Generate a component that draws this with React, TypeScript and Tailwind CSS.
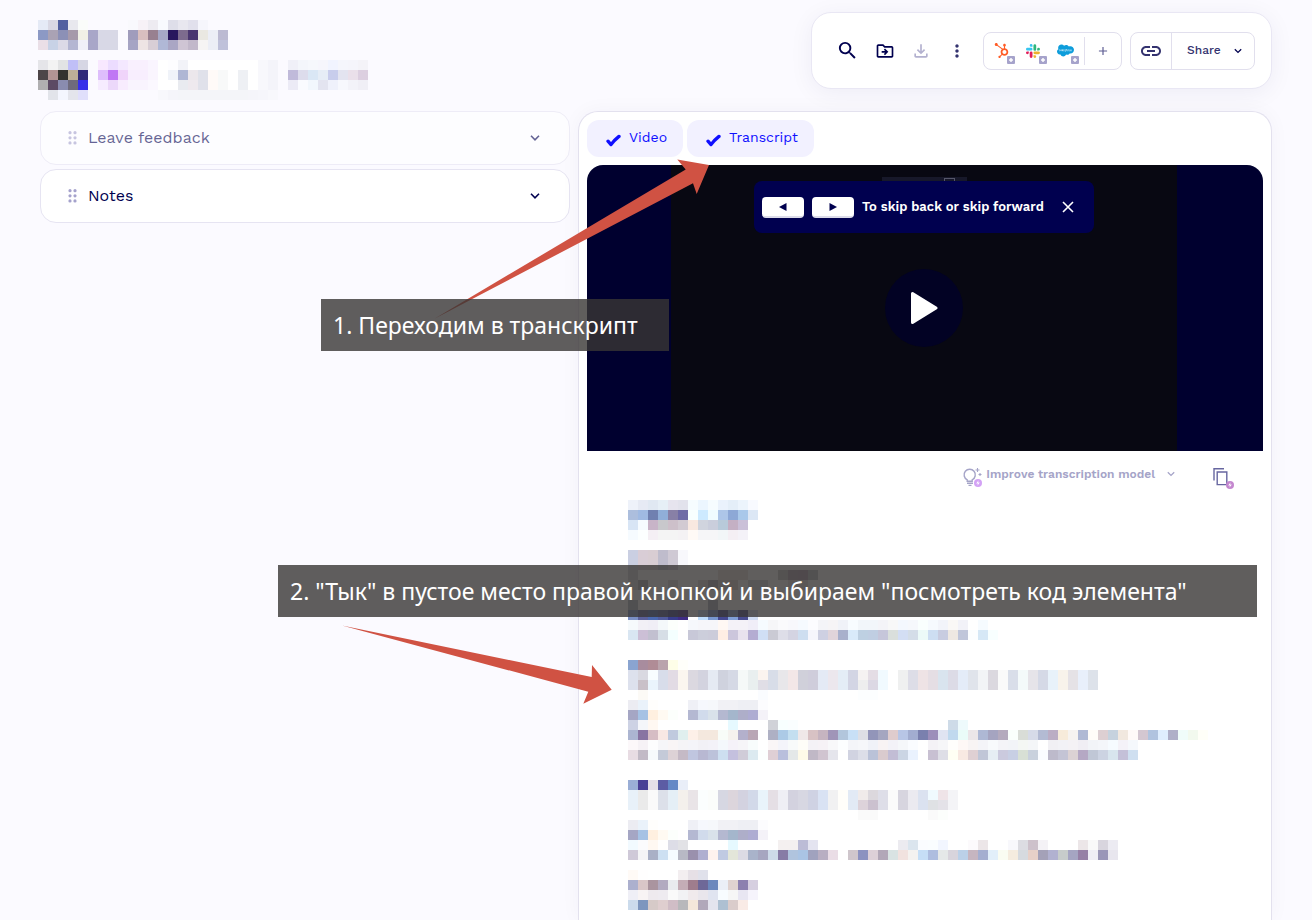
import React from "react";
import { FaHubspot, FaSalesforce } from "react-icons/fa";
import {
  MdAdd,
  MdLink,
  MdMoreVert,
  MdOutlineDriveFileMove,
  MdOutlineFileDownload,
  MdSearch,
} from "react-icons/md";

const CELL = 10;

const speakerLine = [
  "ececf2 eaf2fa fffefc . . . eff0f6 f6f8fd f6f8fb f1f1f5 f1f1f5 eeeff4 eeeff4 fcfcfe",
  "a5a6c4 a6c2e4 fff0e0 fffaf2 fcfffc . b4b8d2 d1dbec d9e2ea b4b8d0 a4b6cc aeaec9 aeacd2 f4f2f8",
];

const headerRows = [
  "e5eaf6 d9d8e4 5260a0 e8e8ee fafcfa . . . . f9f9fd f7f2f7 edebf1 f8fafe dedee9 e8e7ef e1e0ec f6f6fc",
  "8c99c5 aaa2b4 8c90b6 a699aa f1f0e6 a8a6c8 d8d8e6 d8d8e6 . a09cbc d9bfbf 988090 a6a8c6 28165e 7d6b8e 4a3670 eae8e2 eceef6 bcbad2",
  "eadfe7 c8d2e6 dcdae7 b4b6d2 f0f0f8 a8a6c8 d8d8e6 d8d8e6 . a6a4c4 eee4e4 d8ced6 b0b8d6 aaa6c4 cfc5d4 c2b8ca f6f4f4 eceef6 bfc1da",
  "",
  "e5e5e9 f3f3f3 e2e3e4 c0bff7 d6d6e4 . f8e8ff ecdcff f4e8ff f9f0fe f9f0fe faf5ff ffffff fdfdff f2f3f8 ffffff ffffff ffffff ffffff ffffff ffffff ffffff f8f8fc f4f4fa . f0f0f8 f4f6fb f6f8fc f6f6fc f1f4ff f5f6fc f5f5fb f4f3f8",
  "4d4548 b29494 33322f bcae98 302a7a . debefc c078f4 f0d4fa f8eefe f8eefe faf5fe ffffff f0f3f9 afb6d4 ece7ec e0e1ea fffaf8 f8f9f9 ffffff eef0f4 ffffff f8f8fc f4f4fa . c0bada dddcec dae7f5 e6edf6 c8cdec e3e4f0 eae0ea dccfe0",
  "b0afb1 5c4a64 8a8caf 6f6b7c 3730e9 . f6ecff ecd8fa f8ecfe f9f4fe f9f4fe fbf8ff ffffff ffffff e9ebf0 eee9ee e0e1ea fffaf8 f8f9f9 ffffff eef0f4 ffffff f8f8fc f4f4fa . ecebf6 fafbff f2f7fd e3e4f0 eff1fb f7f8fd f3f3f9 f0eff6",
  ". e2e4ea f4f6fe e4e5ec e0dffb . . . . . . . f8f8fc f5f5fa f4f5f9 f4f5f9 f4f5f9 f4f5f9 f4f5f9 f4f5f9 f4f5f9 f5f5fa f6f6fb f8f8fc",
];

const transcriptRows = [
  "eef2fa e6eaf4 e0e8f2 e6eff6 e6e4ee e2e2ec f6fcff ecf6ff f6fcff eaf2fc e4eef8 ecf4fc f8faff",
  "acbedd a0bae2 7080b0 90aed8 8880a6 6f6ca6 f8ffff cdeaff f0fcff adc6e8 8da8d6 a9c8ea dce7f5",
  "d8e5f5 f6fbff c8b4c8 c8c8cc cdc0ca d2cad2 f8e8e0 d0d4de cacedc b8cada c4b0c4 cac0d8",
  "f6fbff fcffff f4eff4 f4f4f4 f4f4f4 f4f2f4 fffaf6 f6f6f8 f6f6f8 f2f6f8 f4eff4 f4f2f8",
  "",
  "cacfe2 d9cdd6 d9cdd3 bfbccc cfc9d4 f8f8fc",
  "cacfe2 d9cdd6 d9cdd3 bfbccc cfc9d4 f8f8fc",
  "d0d0d8 . . . . . . . . ece0dc ece0dc ece0dc . . . c0c0c0 a89aa8 a898a8 b8bcc0",
  "d8d8dc a8a8b0 . . dcd4d4 . . dcd4d4 a8a4b0 dcd0cc dcd0cc . d0d4dc d0d4dc . . e4dcdc e4dcdc",
  "",
  "b0b8c4 . . . . . . . a8b0bc",
  "7a8fc4 5a5f9a 4a68b0 505a9c 383c8c 402c84 . c0e0ff 7898d0 444890 80a0d8 484c90 d0dcf4",
  "f6fafc f2f0f6 f0eef6 f4f8fa fcfffc . f6f8fc f6f6fa f6f6fa fff8f4 f4f2f8 f4f2f8 f0eef8 f6fbff f6f6f8 fafafc f8f8fc f6faff fcfcff f4f4f8 f6f4f6 f0f2f8 f8fcff f2f6fa f2f6fa f4f4f8 f8f8f8 f4f8fe f6f8fc fafffe f6fafe f2f4fa faf8f6 f2f2f8 . f6fbff",
  "d9e6f2 ccbfd6 c2c0d0 d6dee6 f4ffff . c8c8d8 cccedb ccccda ffeee4 ccc6dc e8e2ee b4acd2 d0dff5 cacad4 dedee8 d4d4e2 cedef0 f6f6fc ced0e2 e0d4da a8b0cc d9eafa bed0e2 c0cee2 c6c6da dadfdc d3def4 d4dde8 ecfaf8 cddef2 c8cce0 eee8e2 c0c6da fcfeff d6e8f6 f8ffff",
  "",
  "",
  "8aa4d0 a88c9e b08c96 baa4ac fefee8 fffffa",
  "dde1ed d9d9e1 f8fdff d8ddea e2dbe4 fbf6ef dbd8e0 d3d3df e5eaf3 cfd2de d5d9e5 f5f9f8 e9efef fbf4ef d8dde8 e8e7ea f3e7e7 d0d0da cfcddb e4eaf5 ece7ed e4edf6 d3d5e4 f5f2f2 e4dde5 f1faff . eff0f0 dddde7 eee3e5 e5dee4 d9e4ee dcdbe6 e4ecf8 e0e4eb f2f4f6 dbd8df fafafa d9dee9 f4fafa e6e4e9 d5d9e6 e8f2fa f8f3eb e5e2e6 e8effb dde2ea",
  "dde1ed c9c0c8 eaf4fc d8ddea e2dbe4 fbf6ef dbd8e0 d3d3df e5eaf3 cfd2de d5d9e5 f5f9f8 e9efef e0dee6 d8dde8 e8e7ea f3e7e7 d0d0da cfcddb e4eaf5 ece7ed e4edf6 d3d5e4 eeeeee dcd8e4 f1faff . eff0f0 dddde7 eee3e5 e5dee4 d9e4ee dcdbe6 e4ecf8 e0e4eb f2f4f6 dbd8df fafafa d9dee9 f4fafa e6e4e9 d5d9e6 e8f2fa f8f3eb e5e2e6 e8effb dde2ea",
  ". fcfaf6 . . . . . . . . . . . fafcff . . . . . . . . . fcfeff fcfeff",
  speakerLine[0],
  speakerLine[1],
  "cdd2e4 f4f6fa fff8f2 . . . . . . . e6f9ff . . . d0d2d8 f8ffff fafeff . . . . . . . . . . . . . . . cedbe8 eefafc",
  "acb5d1 8874a2 d6bdc4 f8e8e4 c0cade e0efee fdf0e8 f4e8de f4e8de f8fcf8 f5f2ee b3b0cc b9a6b5 fefeff aeb0c4 accae6 c4dff0 efe8e8 d8c2c4 c6b4c0 a095b8 b2c6dc c8e0f6 dddfe5 9295b9 a5a6c0 dfcccd b8c6e6 a2add0 7a80ae 9c8eba e0e4f2 c0d9ee eafcf8 ebe6e8 aeb8d4 a5a4c0 b4aabd fafffc d9ddd7 d6dbe8 b3bbd3 bbadc4 f7ebda f6f3f0 b0b9d4 fffcf8 ddcfd2 c6d2de f1e8df fffaf8 d4c7d1 b0c3df dfeefe afafc8 f0fcfa f2f9ee fffff8",
  "fcf8fa f6f2f6 fdfdfe f6f6f9 f9f5f6 f5f4f7 f4f4f9 f2f1f6 f3f2f8 f4f8fc f5f2f9 f6f5f8 f8fcfc . faf6f7 f4f4fa f8fafa fefdf8 f4f2f6 f6f2f6 f8f8fa fcfeff f4f5f9 f6f7fa f0f2f8 f8f3f4 f3f2f8 f5f7fa fafcff . f4f2f6 f6f6f8 fffefc fef8f6 f8f4f4 f4f4f8 f8fafc f4f4f8 f2f4f8 f4f7f4 f4f6f8 . f1f0f4 f2f2f6 f4f2f5 f0eef4 f2f4f8 f4f6fa f6fbff f4f2f8 f5f8fc",
  "e8dce3 c2bac6 f6fafc c4cad8 ddd2d6 c5bac6 c0c6e0 b8b8d2 bcc2da cddff0 c4c0de d0ccd8 dceaf0 fcfffe dfcfd5 b9bfdc e4e8e8 fefae8 c0b8c6 d0c4d0 e5e5ec . d1d3e1 dcdee8 bac2d8 dacbce c2bdd5 cbd5e4 eaf2fe . c8c0d2 dedee6 fffff4 f8e9e2 dfd0d3 c0c6d7 e6eef4 cbcade c8cfe4 d8e0d5 c9d1dd fafcff bdbacb c4c4d5 dcd2d4 b5a8c4 c0c7d6 ccd3e2 d8e5ee c4c0d8 cfdff0",
  "",
  "",
  "9aaed6 4a4096 e6dfe8 5c5ca4 6488c6 e9eef8",
  "e8f1f9 eaeaea fafafa dce0e9 e5eff6 f4f0ec e9e4e7 fbfefe fbfdfb d6d7e2 dcd5dc d3d2e0 d2d9e9 e9f4fb e5dfe5 efeff5 d3d2df d7d7e2 cfd2e3 d9e2f3 f1f1f2 fffefa e2eaf5 f0ebea dcd8dd dedee8 fbfbfb d7d5df ebeaf0 dbe2f0 f0fafe efe4e8 f4f4f7",
  "e8f1f9 eaeaea fafafa dce0e9 e5eff6 f4f0ec e9e4e7 fbfefe fbfdfb d6d7e2 dcd5dc d3d2e0 d2d9e9 e9f4fb e5dfe5 efeff5 d3d2df d7d7e2 cfd2e3 d9e2f3 f1f1f2 fffefa e2eaf5 ddd3da cbc1cf dedee8 fbfbfb d7d5df ebeaf0 dbe2f0 dfe1e4 e4e2e8 f4f4f7",
  ". . . . . . . . . . . . . . . . . . . . . . . fafafa fafafa . . . . . fafafa fcfefc",
  speakerLine[0],
  speakerLine[1],
  "f2faff fbfbfd fff8f2 fffefe dddde7 e2e2e6 . . . . e6f9ff . . . . f4f0f0 f4f0f0 bcbcd6 e4e4f0 . . . . . . . . ecebf0 dbe5ee fafcff fafdff f2f6ff . . fcfafc ece6e8 . . f8f8fc dcdce2 cdc1cb f4f2f6 . . . ece6e8 f9f9f9 d8d5de ecebf2",
  "cfc9d8 f4f4f6 a9b0c6 cde0f2 f6fcff b8b9c5 9a90ad b0aed0 fef2ee c0cae2 e3e6d9 dcdbe4 a9b3ca a6a6c0 cddbe9 877ca6 b0c4de aac4e4 a0a2be b8aec2 eadde6 . cfc6cc 8c92c0 ddd0d8 b2a7b8 d9e3e3 f1e2df f4f2f0 c6def6 aebddf e5e8e8 d8d4dc bbd0e8 c6b5c0 a4aed0 e2effa fafcf2 f5ecdf d6dadf e7d0c8 a4a1b8 b1b1d0 c7cccb a5a5c2 9680a6 efeef6 9a96b8 e8e6ee",
  "",
  "fffaf6 fffefe . . . f3eef0 e6e0e6 e0e1eb",
  "acb0ce d9c6c8 aa949f b2aac0 e9ebee c4adb6 9f7d8d 6e6898 6c88bd ebeff7 dfd2d0 8c80af d6cfe0",
  "efeff6 f8f4f4 eeeaee eeebf0 fafafa f2f2f4 f0eaec e9e6ec e0e4f0 f8fcff f6f6f6 e8e6f2 f6f4fc",
  "cbdbec 7d96be d6cac8 dfcecf d0bdc6 b8b8bb f4e7da b1a8ba e4e4ee aec0d2 dacccb f9ebe6",
];

function Mosaic({ rows, columns }: { rows: string[]; columns: number }) {
  return (
    <svg
      aria-hidden="true"
      className="block shrink-0"
      width={columns * CELL}
      height={rows.length * CELL}
      shapeRendering="crispEdges"
    >
      {rows.map((row, y) =>
        row.split(" ").map((color, x) =>
          color && color !== "." ? (
            <rect key={`${x}-${y}`} x={x * CELL} y={y * CELL} width={CELL} height={CELL} fill={`#${color}`} />
          ) : null,
        ),
      )}
    </svg>
  );
}

function Chevron({ width = 10 }: { width?: number }) {
  return (
    <svg width={width} height="6" viewBox="0 0 10 6" fill="none" stroke="currentColor" strokeWidth="1.6" aria-hidden="true">
      <path d="M1 .8 5 4.8 9 .8" />
    </svg>
  );
}

function Grip() {
  return (
    <svg width="9" height="14" viewBox="0 0 9 14" fill="#a5a2cc" aria-hidden="true">
      {[1.7, 6.8, 11.9].map((y) => (
        <React.Fragment key={y}>
          <circle cx="2" cy={y} r="1.6" />
          <circle cx="7" cy={y} r="1.6" />
        </React.Fragment>
      ))}
    </svg>
  );
}

function Check() {
  return (
    <svg className="mt-1" width="15" height="13" viewBox="0 0 15 13" fill="none" stroke="#0f0fff" strokeWidth="3.3" strokeLinecap="round" strokeLinejoin="round" aria-hidden="true">
      <path d="M2 7.2 5 10.6Q8 6.4 13 2.4" />
    </svg>
  );
}

function SlackMark() {
  return (
    <svg width="14" height="14" viewBox="0 0 54 54" aria-hidden="true">
      <path fill="#36C5F0" d="M19.7.1a5.4 5.4 0 1 0 0 10.8h5.4V5.5A5.4 5.4 0 0 0 19.7.1m0 14.4H5.4a5.4 5.4 0 0 0 0 10.8h14.3a5.4 5.4 0 0 0 0-10.8" />
      <path fill="#2EB67D" d="M53.8 19.9a5.4 5.4 0 0 0-10.8 0v5.4h5.4a5.4 5.4 0 0 0 5.4-5.4m-14.4 0V5.5a5.4 5.4 0 0 0-10.7 0v14.4a5.4 5.4 0 1 0 10.7 0" />
      <path fill="#ECB22E" d="M34.1 54a5.4 5.4 0 1 0 0-10.8h-5.4v5.4a5.4 5.4 0 0 0 5.4 5.4m0-14.4h14.3a5.4 5.4 0 0 0 0-10.8H34.1a5.4 5.4 0 0 0 0 10.8" />
      <path fill="#E01E5A" d="M0 34.2a5.4 5.4 0 0 0 10.8 0v-5.4H5.4A5.4 5.4 0 0 0 0 34.2m14.3 0v14.4a5.4 5.4 0 0 0 10.8 0V34.2a5.4 5.4 0 1 0-10.8 0" />
    </svg>
  );
}

function Integration({ label, children }: { label: string; children: React.ReactNode }) {
  return (
    <button aria-label={label} className="relative flex h-9 w-8 items-center justify-center">
      {children}
      <svg className="absolute right-0.5 bottom-[5px]" width="8" height="8" viewBox="0 0 8 8" aria-hidden="true">
        <rect width="8" height="8" rx="1" fill="#a6a3cb" />
        <path d="M4 2 4.8 3.2 6 4 4.8 4.8 4 6 3.2 4.8 2 4 3.2 3.2Z" fill="#fff" stroke="#fff" strokeWidth=".6" />
      </svg>
    </button>
  );
}

function Toolbar() {
  return (
    <div className="flex h-[77px] items-center rounded-[20px] border border-[#e9e7f4] bg-white pr-4 pl-[17px] text-[#00004f] shadow-[0_4px_24px_rgba(0,0,80,0.06)]">
      <button aria-label="Search" className="flex w-9 justify-center">
        <MdSearch size={23} />
      </button>
      <button aria-label="Move to folder" className="mr-0.5 flex w-9 justify-center pl-1">
        <MdOutlineDriveFileMove size={20} />
      </button>
      <button aria-label="Download" className="flex w-9 justify-center text-[#b3b1cf]">
        <MdOutlineFileDownload size={20} />
      </button>
      <button aria-label="More" className="flex w-9 justify-center text-[#34336f]">
        <MdMoreVert size={20} />
      </button>
      <div className="ml-2 flex h-[38px] items-center rounded-lg border border-[#e1dfed] pl-px">
        <Integration label="HubSpot">
          <FaHubspot size={15} color="#ff5c26" />
        </Integration>
        <Integration label="Slack">
          <SlackMark />
        </Integration>
        <Integration label="Salesforce">
          <FaSalesforce size={17} color="#0d9ddb" />
        </Integration>
        <span className="ml-[3px] h-7 w-px bg-[#e1dfed]" />
        <button aria-label="Add integration" className="flex h-9 w-9 items-center justify-center text-[#5d5c92]">
          <MdAdd size={14} />
        </button>
      </div>
      <div className="ml-2 flex h-[38px] items-stretch rounded-lg border border-[#e1dfed]">
        <button aria-label="Copy link" className="flex w-[41px] items-center justify-center border-r border-[#e1dfed] text-[#34336f]">
          <MdLink size={24} />
        </button>
        <button className="flex w-[82px] items-center justify-between pr-3 pl-[15px] text-xs font-medium text-[#34336f]">
          <span className="pb-0.5">Share</span>
          <span className="text-[#00004f]">
            <Chevron width={8} />
          </span>
        </button>
      </div>
    </div>
  );
}

function Section({ title, faded }: { title: string; faded?: boolean }) {
  return (
    <button
      className={
        faded
          ? "flex h-[54px] w-full items-center rounded-2xl border border-[#e6e4f2] bg-white pr-[29px] pl-[27px] text-base text-[#00004f] opacity-60"
          : "flex h-[54px] w-full items-center rounded-2xl border border-[#e6e4f2] bg-white pr-[29px] pl-[27px] text-base text-[#00004f]"
      }
    >
      <Grip />
      <span className="ml-[11px] flex-1 text-left">{title}</span>
      <Chevron />
    </button>
  );
}

function Toggle({ label }: { label: string }) {
  return (
    <button aria-pressed="true" className="flex h-[37px] items-center gap-2 rounded-xl bg-[#f2f1ff] pr-4 pl-[19px] text-sm text-[#0f0fff]">
      <Check />
      <span className="pb-1">{label}</span>
    </button>
  );
}

function KeyCap({ direction }: { direction: "back" | "forward" }) {
  return (
    <kbd className="flex h-[21px] w-[42px] items-center justify-center rounded border-b-2 border-[#dcdcea] bg-white pt-0.5">
      <svg width="8" height="8" viewBox="0 0 8 8" fill="#00004f" aria-hidden="true">
        <path d={direction === "back" ? "M7.5 0v8L0 4Z" : "M.5 0v8L8 4Z"} />
      </svg>
    </kbd>
  );
}

function VideoPlayer() {
  return (
    <div className="relative mt-2 flex aspect-[676/286] justify-center overflow-hidden rounded-t-2xl bg-[#00002f] pr-0.5">
      <div className="h-full w-3/4 bg-[#080812]" />
      <div className="absolute top-3 left-[295px] flex h-3 w-[85px] justify-end bg-[#17182a] pt-px pr-3">
        <span className="h-3 w-[11px] border border-[#55566a]" />
      </div>
      <div className="absolute top-4 flex h-[52px] w-[340px] items-center gap-2 rounded-lg bg-[#00004f] px-2 text-[13px] font-semibold text-white">
        <KeyCap direction="back" />
        <KeyCap direction="forward" />
        <span className="flex-1 whitespace-nowrap">To skip back or skip forward</span>
        <button aria-label="Close hint" className="mr-3">
          <svg width="12" height="12" viewBox="0 0 12 12" stroke="#fff" strokeWidth="1.6" aria-hidden="true">
            <path d="m1 1 10 10M11 1 1 11" />
          </svg>
        </button>
      </div>
      <button aria-label="Play" className="absolute top-[104px] flex size-[78px] items-center justify-center rounded-full bg-[#020224]">
        <svg width="28" height="34" viewBox="0 0 28 34" fill="#fff" stroke="#fff" strokeWidth="3" strokeLinejoin="round" aria-hidden="true">
          <path d="M2.5 2.5v29L26 17Z" />
        </svg>
      </button>
    </div>
  );
}

function Bolt({ color }: { color: string }) {
  return (
    <svg className="absolute right-0 bottom-0" width="8" height="8" viewBox="0 0 8 8" aria-hidden="true">
      <circle cx="4" cy="4" r="4" fill={color} />
      <path d="M4.6 1.2 2.2 4.5H4L3.4 6.8 5.8 3.5H4Z" fill="#fff" />
    </svg>
  );
}

function TranscriptActions() {
  return (
    <div className="flex h-[49px] items-center justify-end pr-[29px] pb-1 text-[#a5a4c8]">
      <button className="flex items-center text-xs font-semibold">
        <span className="relative mt-1.5 mr-1 size-5">
          <svg width="20" height="20" viewBox="0 0 20 20" fill="none" stroke="currentColor" strokeWidth="1.4" aria-hidden="true">
            <path d="M5.2 12.8a5.6 5.6 0 1 1 5 0v1.4h-5ZM5 16.2h6M6.5 18.4h3" />
            <path d="M15.5 1v4M13.5 3h4M18 6v3M16.5 7.5h3" strokeWidth="1.1" />
          </svg>
          <Bolt color="#d3a2f5" />
        </span>
        Improve transcription model
        <span className="ml-3">
          <Chevron width={8} />
        </span>
      </button>
      <button aria-label="Copy transcript" className="relative mt-2.5 ml-[38px] h-[21px] w-[21px] text-[#6766a0]">
        <svg width="21" height="21" viewBox="0 0 21 21" fill="none" stroke="currentColor" strokeWidth="1.4" aria-hidden="true">
          <path d="M1 12.5V.8H11" />
          <path d="M4.2 4h9.6v12.6H4.2Z" />
        </svg>
        <Bolt color="#c487cf" />
      </button>
    </div>
  );
}

function Annotations() {
  return (
    <>
      <svg className="pointer-events-none absolute top-0 left-0" width="720" height="720" fill="#d05243" aria-hidden="true">
        <path d="M434 319 685.7 169.5 677.3 159.5 709 165 696.7 194 693 183.3Z" />
        <path d="M342 625.5 591.7 677 592 665 611.7 689.7 583.3 703.7 588.3 691.7Z" />
      </svg>
      <p className="absolute top-[299px] left-[321px] flex h-[52px] w-[348px] items-center bg-[rgba(56,54,52,0.8)] pl-3 font-['Noto_Sans',sans-serif] text-[23px] whitespace-nowrap text-white">
        1. Переходим в транскрипт
      </p>
      <p className="absolute top-[565px] left-[278px] flex h-[52px] w-[979px] items-center bg-[rgba(56,54,52,0.8)] pl-3 font-['Noto_Sans',sans-serif] text-[23px] whitespace-nowrap text-white">
        2. "Тык" в пустое место правой кнопкой и выбираем "посмотреть код элемента"
      </p>
    </>
  );
}

export default function App() {
  return (
    <div className="relative flex min-h-screen flex-col bg-[#fbfaff] font-['Work_Sans','Inter',sans-serif]">
      <header className="flex items-start justify-between pt-3 pr-10 pl-[38px]">
        <div className="pt-2">
          <Mosaic rows={headerRows} columns={33} />
        </div>
        <Toolbar />
      </header>
      <main className="mt-[11px] grid flex-1 grid-cols-[530fr_694fr] gap-2 px-10">
        <section className="flex flex-col gap-1">
          <Section title="Leave feedback" faded />
          <Section title="Notes" />
        </section>
        <section className="rounded-t-[20px] border border-b-0 border-[#e3e1ee] bg-white px-2 pt-2 shadow-[0_0_20px_rgba(0,0,80,0.04)]">
          <div className="flex gap-1">
            <Toggle label="Video" />
            <Toggle label="Transcript" />
          </div>
          <VideoPlayer />
          <TranscriptActions />
          <div className="overflow-hidden pl-[41px]">
            <Mosaic rows={transcriptRows} columns={58} />
          </div>
        </section>
      </main>
      <Annotations />
    </div>
  );
}
